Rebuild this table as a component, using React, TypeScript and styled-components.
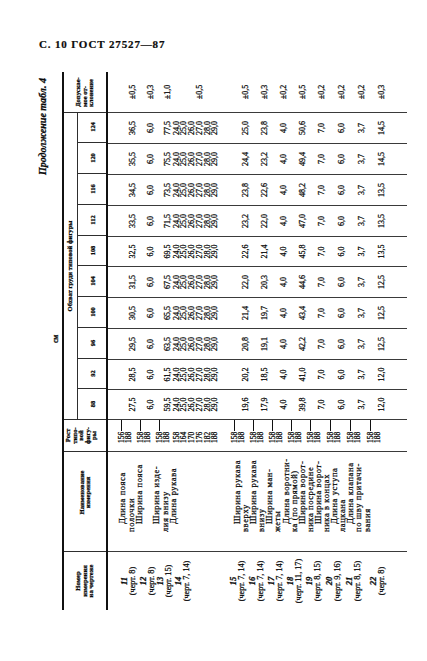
import React from 'react';
import styled, { createGlobalStyle } from 'styled-components';

const GlobalStyle = createGlobalStyle`
  html, body {
    margin: 0;
    padding: 0;
    background: #ffffff;
  }
  body {
    font-family: "Liberation Serif", "DejaVu Serif", serif;
    color: #0c0c0c;
  }
  * {
    box-sizing: border-box;
  }
`;

// original (unrotated) table geometry
const TABLE_W = 538;
const SIZES = [88, 92, 96, 100, 104, 108, 112, 116, 120, 124];
const SIZE_W = [30, 30, 31, 31, 31, 30, 31, 31, 31, 31];
const TAIL_H = 19;
const SLEEVE = ['24,0', '25,0', '26,0', '27,0', '28,0', '29,0'];

type RowSpec = {
  h: number;
  no: string;
  ref: string;
  growth: string[];
  values: string[];
  stacked?: boolean;
  tol: string;
  noPad: number;
  growthPad: number;
  noTop?: boolean;
  tolTop?: number;
};

const same = (v: string) => SIZES.map(() => v);

const rows: RowSpec[] = [
  { h: 31, no: '11', ref: '(черт. 8)', growth: ['156', '188'], values: ['27,5', '28,5', '29,5', '30,5', '31,5', '32,5', '33,5', '34,5', '35,5', '36,5'], tol: '±0,5', noPad: 2, growthPad: 6 },
  { h: 18, no: '12', ref: '(черт. 8)', growth: ['158', '188'], values: same('6,0'), tol: '±0,3', noPad: 1, growthPad: 5 },
  { h: 17, no: '13', ref: '(черт. 15)', growth: ['158', '188'], values: ['59,5', '61,5', '63,5', '65,5', '67,5', '69,5', '71,5', '73,5', '75,5', '77,5'], tol: '±1,0', noPad: 1, growthPad: 3 },
  { h: 47, no: '14', ref: '(черт. 7, 14)', growth: ['158', '164', '170', '176', '182', '188'], values: same(''), stacked: true, tol: '±0,5', noPad: 0, growthPad: 2, noTop: true, tolTop: 22 },
  { h: 31, no: '15', ref: '(черт. 7, 14)', growth: ['158', '188'], values: ['19,6', '20,2', '20,8', '21,4', '22,0', '22,6', '23,2', '23,8', '24,4', '25,0'], tol: '±0,5', noPad: 6, growthPad: 6 },
  { h: 19, no: '16', ref: '(черт. 7, 14)', growth: ['158', '188'], values: ['17,9', '18,5', '19,1', '19,7', '20,3', '21,4', '22,0', '22,6', '23,2', '23,8'], tol: '±0,3', noPad: 6, growthPad: 6 },
  { h: 19, no: '17', ref: '(черт. 7, 14)', growth: ['158', '188'], values: same('4,0'), tol: '±0,2', noPad: 6, growthPad: 6 },
  { h: 19, no: '18', ref: '(черт. 11, 17)', growth: ['158', '188'], values: ['39,8', '41,0', '42,2', '43,4', '44,6', '45,8', '47,0', '48,2', '49,4', '50,6'], tol: '±0,5', noPad: 6, growthPad: 6 },
  { h: 19, no: '19', ref: '(черт. 8, 15)', growth: ['158', '188'], values: same('7,0'), tol: '±0,2', noPad: 6, growthPad: 6 },
  { h: 20, no: '20', ref: '(черт. 9, 16)', growth: ['158', '188'], values: same('6,0'), tol: '±0,2', noPad: 6, growthPad: 6 },
  { h: 20, no: '21', ref: '(черт. 8, 15)', growth: ['158', '188'], values: same('3,7'), tol: '±0,2', noPad: 6, growthPad: 6 },
  { h: 20, no: '22', ref: '(черт. 8)', growth: ['158', '188'], values: ['12,0', '12,0', '12,5', '12,5', '12,5', '13,5', '13,5', '13,5', '14,5', '14,5'], tol: '±0,3', noPad: 2, growthPad: 6 },
];

const namesTop: { lines: string[]; gap?: boolean }[] = [
  { lines: ['Длина пояса', 'полочки'] },
  { lines: ['Ширина пояса'] },
  { lines: ['Ширина изде-', 'лия внизу'], gap: true },
  { lines: ['Длина рукава'] },
];

const namesBottom: string[][] = [
  ['Ширина рукава', 'вверху'],
  ['Ширина рукава', 'внизу'],
  ['Ширина ман-', 'жеты'],
  ['Длина воротни-', 'ка (по прямой)'],
  ['Ширина ворот-', 'ника посредине'],
  ['Ширина ворот-', 'ника в концах'],
  ['Длина уступа', 'лацкана'],
  ['Длина клапана', 'по шву притачи-', 'вания'],
];

const Page = styled.div`
  width: 427px;
  height: 661px;
  overflow: hidden;
  background: #ffffff;
  padding: 39px 0 0 36px;
`;

const RunningHead = styled.div`
  margin-left: 3px;
  height: 11px;
  font-size: 11px;
  line-height: 11px;
  font-weight: bold;
  letter-spacing: 0.85px;
  white-space: nowrap;
  -webkit-text-stroke: 0.2px #000;
`;

const Frame = styled.div`
  margin-top: 22px;
  width: 371px;
  height: ${TABLE_W}px;
`;

const Sheet = styled.div`
  width: ${TABLE_W}px;
  transform-origin: 0 0;
  transform: translateY(${TABLE_W}px) rotate(-90deg);
  -webkit-text-stroke: 0.25px #000;
`;

const Caption = styled.div`
  height: 14px;
  padding-right: 6px;
  text-align: right;
  font-size: 10px;
  line-height: 14px;
  font-style: italic;
  font-weight: bold;
`;

const Unit = styled.div`
  height: 12px;
  padding-left: 267px;
  font-size: 7.5px;
  line-height: 12px;
  font-weight: bold;
`;

const Table = styled.div`
  border-top: 2px solid #111;
`;

const Head = styled.div`
  display: flex;
  height: 44px;
  border-bottom: 2px solid #111;
`;

const HeadCell = styled.div<{ $w: number; $first?: boolean; $left?: number; $pb?: number; $alignLeft?: boolean }>`
  width: ${p => p.$w}px;
  flex: none;
  border-left: ${p => (p.$first ? 'none' : '1px solid #2e2e2e')};
  display: flex;
  flex-direction: column;
  justify-content: center;
  align-items: ${p => (p.$alignLeft ? 'flex-start' : 'center')};
  padding-left: ${p => p.$left ?? 0}px;
  padding-bottom: ${p => p.$pb ?? 0}px;
  font-size: 6.6px;
  line-height: 6.5px;
  font-weight: bold;
  white-space: nowrap;
`;

const Group = styled.div<{ $w: number }>`
  width: ${p => p.$w}px;
  flex: none;
  border-left: 1px solid #2e2e2e;
  display: flex;
  flex-direction: column;
`;

const GroupTitle = styled.div`
  height: 14px;
  border-bottom: 1px solid #2e2e2e;
  text-align: center;
  font-size: 6.6px;
  line-height: 12px;
  font-weight: bold;
`;

const SubRow = styled.div`
  flex: 1;
  display: flex;
`;

const SubCell = styled.div<{ $w: number; $first?: boolean }>`
  width: ${p => p.$w}px;
  flex: none;
  border-left: ${p => (p.$first ? 'none' : '1px solid #2e2e2e')};
  display: flex;
  align-items: center;
  justify-content: center;
  font-size: 6.4px;
  font-weight: bold;
`;

const Body = styled.div`
  display: flex;
  height: 299px;
`;

const Col = styled.div<{ $w: number; $first?: boolean }>`
  width: ${p => p.$w}px;
  flex: none;
  border-left: ${p => (p.$first ? 'none' : '1px solid #3a3a3a')};
  display: flex;
  flex-direction: column;
`;

const Slot = styled.div<{ $h: number; $top?: number; $bottom?: number; $stretch?: boolean }>`
  height: ${p => p.$h}px;
  flex: none;
  display: flex;
  flex-direction: column;
  justify-content: ${p => (p.$top !== undefined ? 'flex-start' : 'flex-end')};
  align-items: ${p => (p.$stretch ? 'stretch' : 'center')};
  padding-top: ${p => p.$top ?? 0}px;
  padding-bottom: ${p => p.$bottom ?? 0}px;
  white-space: nowrap;
`;

const Value = styled.div`
  font-size: 8px;
  line-height: 7.7px;
`;

const MeasureNo = styled.div`
  font-size: 8.6px;
  line-height: 8.5px;
  font-style: italic;
  font-weight: bold;
`;

const MeasureRef = styled.div`
  font-size: 8.2px;
  line-height: 8.5px;
`;

const GrowthLine = styled.div<{ $lh: number }>`
  display: flex;
  align-items: center;
  width: 100%;
  padding-left: 8px;
  font-size: 7.4px;
  line-height: ${p => p.$lh}px;
`;

const Dash = styled.span`
  flex: 1;
  align-self: center;
  height: 1px;
  min-width: 8px;
  margin-left: 1px;
  background: #111;
`;

const NameBlock = styled.div<{ $h: number; $pt: number; $lh: number }>`
  height: ${p => p.$h}px;
  flex: none;
  padding: ${p => p.$pt}px 0 0 19px;
  font-size: 8.5px;
  line-height: ${p => p.$lh}px;
  letter-spacing: 0.6px;
  white-space: nowrap;
`;

const NameEntry = styled.div<{ $gap?: boolean }>`
  margin-top: ${p => (p.$gap ? 8.5 : 0)}px;
`;

const NameLine = styled.div<{ $lead?: boolean }>`
  padding-left: ${p => (p.$lead ? 8 : 0)}px;
`;

const Name: React.FC<{ lines: string[]; gap?: boolean }> = ({ lines, gap }) => (
  <NameEntry $gap={gap}>
    {lines.map((l, i) => <NameLine key={i} $lead={i === 0}>{l}</NameLine>)}
  </NameEntry>
);

const App: React.FC = () => {
  const topH = rows.slice(0, 4).reduce((s, r) => s + r.h, 0);
  const bottomH = rows.slice(4).reduce((s, r) => s + r.h, 0) + TAIL_H;

  return <>
    <GlobalStyle />
    <Page>
      <RunningHead>С. 10 ГОСТ 27527—87</RunningHead>
      <Frame>
        <Sheet>
          <Caption>Продолжение табл. 4</Caption>
          <Unit>см</Unit>
          <Table>
            <Head>
              <HeadCell $w={58} $first $pb={-3}>
                <div>Номер</div>
                <div>измерения</div>
                <div>на чертеже</div>
              </HeadCell>
              <HeadCell $w={100} $left={18}>
                <div>Наименование</div>
                <div>измерения</div>
              </HeadCell>
              <HeadCell $w={32} $pb={7}>
                <div>Рост</div>
                <div>типо-</div>
                <div>вой</div>
                <div>фигу-</div>
                <div>ры</div>
              </HeadCell>
              <Group $w={307}>
                <GroupTitle>Обхват груди типовой фигуры</GroupTitle>
                <SubRow>
                  {SIZES.map((s, i) => <SubCell key={s} $w={SIZE_W[i]} $first={i === 0}>{s}</SubCell>)}
                </SubRow>
              </Group>
              <HeadCell $w={41} $alignLeft $left={5} $pb={-3}>
                <div>Допускае-</div>
                <div>мое от-</div>
                <div>клонение</div>
              </HeadCell>
            </Head>

            <Body>
              <Col $w={58} $first>
                {rows.map(r => (
                  <Slot key={r.no} $h={r.h} $top={r.noTop ? 0 : undefined} $bottom={r.noPad}>
                    <MeasureNo>{r.no}</MeasureNo>
                    <MeasureRef>{r.ref}</MeasureRef>
                  </Slot>
                ))}
                <Slot $h={TAIL_H} />
              </Col>

              <Col $w={100}>
                <NameBlock $h={topH} $pt={10} $lh={8.5}>
                  {namesTop.map((n, i) => <Name key={i} lines={n.lines} gap={n.gap} />)}
                </NameBlock>
                <NameBlock $h={bottomH} $pt={12} $lh={8.1}>
                  {namesBottom.map((n, i) => <Name key={i} lines={n} />)}
                </NameBlock>
              </Col>

              <Col $w={32}>
                {rows.map(r => (
                  <Slot key={r.no} $h={r.h} $bottom={r.growthPad} $stretch>
                    {r.stacked
                      ? r.growth.map(g => <GrowthLine key={g} $lh={7.7}>{g}</GrowthLine>)
                      : <>
                          <GrowthLine $lh={7.6}>{r.growth[0]}<Dash /></GrowthLine>
                          <GrowthLine $lh={7.6}>{r.growth[1]}</GrowthLine>
                        </>}
                  </Slot>
                ))}
                <Slot $h={TAIL_H} />
              </Col>

              {SIZES.map((s, ci) => (
                <Col key={s} $w={SIZE_W[ci]}>
                  {rows.map(r => (
                    <Slot key={r.no} $h={r.h} $bottom={2}>
                      {r.stacked
                        ? SLEEVE.map(v => <Value key={v}>{v}</Value>)
                        : <Value>{r.values[ci]}</Value>}
                    </Slot>
                  ))}
                  <Slot $h={TAIL_H} />
                </Col>
              ))}

              <Col $w={41}>
                {rows.map(r => (
                  <Slot key={r.no} $h={r.h} $top={r.tolTop} $bottom={r.tolTop !== undefined ? 0 : 2}>
                    <Value>{r.tol}</Value>
                  </Slot>
                ))}
                <Slot $h={TAIL_H} />
              </Col>
            </Body>
          </Table>
        </Sheet>
      </Frame>
    </Page>
  </>;
};

export default App;
